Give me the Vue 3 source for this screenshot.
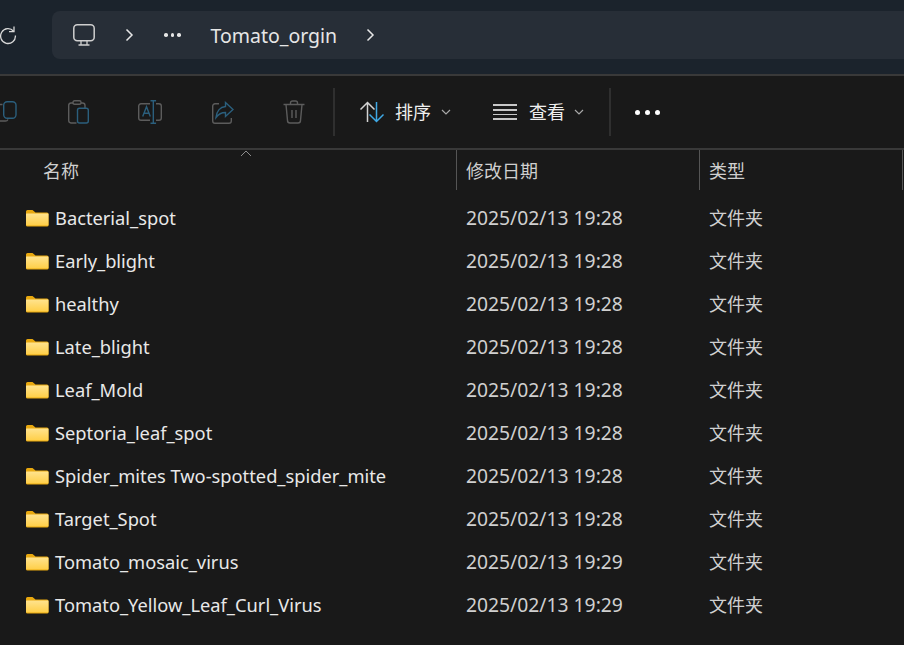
<script setup>
const rows = [
  ['Bacterial_spot', '2025/02/13 19:28'],
  ['Early_blight', '2025/02/13 19:28'],
  ['healthy', '2025/02/13 19:28'],
  ['Late_blight', '2025/02/13 19:28'],
  ['Leaf_Mold', '2025/02/13 19:28'],
  ['Septoria_leaf_spot', '2025/02/13 19:28'],
  ['Spider_mites Two-spotted_spider_mite', '2025/02/13 19:28'],
  ['Target_Spot', '2025/02/13 19:28'],
  ['Tomato_mosaic_virus', '2025/02/13 19:29'],
  ['Tomato_Yellow_Leaf_Curl_Virus', '2025/02/13 19:29'],
]
</script>

<template>
  <div class="win">
    <header class="top">
      <svg class="refresh" width="20" height="20" viewBox="0 0 20 20" fill="none" stroke="#d8d8d8" stroke-width="1.3">
        <path d="M15.6 6.2A7.4 7.4 0 1 0 17.4 10.5" />
        <path d="M16 1.6V6.6H11" />
      </svg>
      <div class="crumb">
        <svg class="pc" width="24" height="24" viewBox="0 0 24 24" fill="none" stroke="#cfcfcf" stroke-width="1.5">
          <rect x="1.8" y="1.8" width="20.4" height="16" rx="3.5" />
          <path d="M9 18v4M15 18v4M6.5 22h11" stroke-width="1.3" />
        </svg>
        <svg class="chev one" width="9" height="14" viewBox="0 0 9 14" fill="none" stroke="#e6e6e6" stroke-width="1.5"><path d="M1.5 1.5 7 7l-5.5 5.5" /></svg>
        <span class="dots"><i></i><i></i><i></i></span>
        <span class="crumb-text">Tomato_orgin</span>
        <svg class="chev" width="9" height="14" viewBox="0 0 9 14" fill="none" stroke="#e6e6e6" stroke-width="1.5"><path d="M1.5 1.5 7 7l-5.5 5.5" /></svg>
      </div>
    </header>

    <div class="tools">
      <svg class="t" width="17" height="24" viewBox="0 0 17 24" fill="none" stroke-width="1.4">
        <path d="M-1 21h6a3 3 0 0 0 3-1.500M2.500 4.500H0" stroke="#5c5c5c" />
        <rect x="3.700" y="1.700" width="12.300" height="16.500" rx="3.500" stroke="#2b5f7d" />
      </svg>
      <svg class="t paste" width="21" height="24" viewBox="0 0 21 24" fill="none" stroke-width="1.4">
        <path d="M5 3H3A2.500 2.500 0 0 0 .700 5.500v15A2.500 2.500 0 0 0 3 23h5.500M13 3h1.500A2.500 2.500 0 0 1 17 5.500v2.500" stroke="#5c5c5c" />
        <rect x="5" y=".700" width="8" height="3.600" rx="1.500" stroke="#5c5c5c" />
        <rect x="9.500" y="8.300" width="10.800" height="14.700" rx="2" stroke="#2b5f7d" />
      </svg>
      <svg class="t rename" width="24" height="24" viewBox="0 0 24 24" fill="none" stroke-width="1.4">
        <path d="M12 3.700H3A2.300 2.300 0 0 0 .700 6v12A2.300 2.300 0 0 0 3 20.300h9M18 3.700h3A2.300 2.300 0 0 1 23.300 6v12a2.300 2.300 0 0 1-2.300 2.300h-3" stroke="#5c5c5c" />
        <path d="M15.300 .7v22.600M12.500 .7h5.600M12.500 23.300h5.600M4.700 16.500 8.500 6.700l3.800 9.800M6 13.300h5" stroke="#2b5f7d" />
      </svg>
      <svg class="t share" width="22" height="24" viewBox="0 0 22 24" fill="none" stroke-width="1.4">
        <path d="M7 3.700H3A2.300 2.300 0 0 0 .7 6v15A2.300 2.300 0 0 0 3 23.300h14a2.300 2.300 0 0 0 2.300-2.300v-3" stroke="#5c5c5c" />
        <path d="M13.500 2.500 21 9.500l-7.500 7v-4C9.500 12.500 6.500 14 4 17.500 4.500 11.500 8 7 13.500 6.500Z" stroke="#2b5f7d" />
      </svg>
      <svg class="t trash" width="22" height="24" viewBox="0 0 22 24" fill="none" stroke="#5c5c5c" stroke-width="1.4">
        <path d="M.5 4.500h21M7.500 4.500V3a2 2 0 0 1 2-2h3a2 2 0 0 1 2 2v1.500M3 4.500 4.500 20.500a2.500 2.500 0 0 0 2.500 2.500h8a2.500 2.500 0 0 0 2.500-2.500L19 4.500M9 10v8M13 10v8" />
      </svg>
      <span class="sep first"></span>
      <svg class="sort" width="26" height="22" viewBox="0 0 26 22" fill="none" stroke-width="1.5">
        <path d="M8.500 21V1.500M1.500 8.500l7-7 7 7" stroke="#d4d4d4" />
        <path d="M17.500 1v19.500M10.500 13.500l7 7 7-7" stroke="#3fa9e6" />
      </svg>
      <span class="label sort-label">排序</span>
      <svg class="caret" width="10" height="6" viewBox="0 0 10 6" fill="none" stroke="#a8a8a8" stroke-width="1.2"><path d="M1 1l4 4 4-4" /></svg>
      <span class="lines"><i></i><i></i><i></i><i></i></span>
      <span class="label view-label">查看</span>
      <svg class="caret second" width="10" height="6" viewBox="0 0 10 6" fill="none" stroke="#a8a8a8" stroke-width="1.2"><path d="M1 1l4 4 4-4" /></svg>
      <span class="sep second"></span>
      <span class="more"><i></i><i></i><i></i></span>
    </div>

    <div class="head">
      <div class="h name">名称
        <svg class="up" width="12" height="7" viewBox="0 0 12 7" fill="none" stroke="#8c8c8c" stroke-width="1"><path d="M1 6l5-5 5 5" /></svg>
      </div>
      <div class="h date">修改日期</div>
      <div class="h type">类型</div>
    </div>

    <div class="list">
      <div v-for="r in rows" :key="r[0]" class="row">
        <svg class="folder" width="24" height="18" viewBox="0 0 24 18">
          <path d="M1 2.500A1.500 1.500 0 0 1 2.500 1H7.500L10.500 3.500H22A1.500 1.500 0 0 1 23.500 5V16A1.500 1.500 0 0 1 22 17.500H2.500A1.500 1.500 0 0 1 1 16Z" fill="#e8a80f" />
          <defs><linearGradient id="fg" x1="0" y1="0" x2="0" y2="1"><stop offset="0" stop-color="#ffe38e" /><stop offset="1" stop-color="#ffcf48" /></linearGradient></defs>
          <rect x="1" y="4.500" width="22.500" height="12" rx=".5" fill="url(#fg)" />
        </svg>
        <span class="fname">{{ r[0] }}</span>
        <span class="fdate">{{ r[1] }}</span>
        <span class="ftype">文件夹</span>
      </div>
    </div>
  </div>
</template>

<style>
html, body { margin: 0; background: #191919; overflow: hidden; }
</style>

<style scoped>
.win {
  width: 904px;
  height: 645px;
  overflow: hidden;
  background: #191919;
  color: #e4e4e4;
  font-family: "Noto Sans", "Noto Sans CJK SC", sans-serif;
  font-size: 18px;
}
.top {
  height: 74px;
  box-sizing: border-box;
  padding-top: 11px;
  display: flex;
  background: #1b232c;
}
.refresh { margin: 14px 0 0 -2px; flex: none; }
.crumb {
  flex: 1;
  margin-left: 34px;
  height: 48px;
  background: #272e37;
  border-radius: 8px 0 0 8px;
  display: flex;
  align-items: center;
  padding-left: 20px;
}
.chev.one { margin-left: 29px; }
.dots { display: flex; gap: 3px; margin-left: 30px; }
.dots i { width: 3.5px; height: 3.5px; border-radius: 50%; background: #e6e6e6; }
.crumb-text { margin-left: 30px; font-size: 19.5px; color: #e6e6e6; }
.crumb-text + .chev { margin-left: 29px; }
.tools {
  height: 76px;
  box-sizing: border-box;
  border-top: 2px solid #393939;
  border-bottom: 2px solid #393939;
  display: flex;
  align-items: center;
}
.t { flex: none; }
.paste { margin-left: 51px; }
.rename { margin-left: 49px; }
.share { margin-left: 50px; }
.trash { margin-left: 49px; }
.sep { width: 2px; height: 48px; background: #2f2f2f; flex: none; }
.sep.first { margin-left: 28px; }
.sort { margin-left: 24px; flex: none; }
.label { color: #eee; font-size: 18px; margin-top: -2px; }
.sort-label { margin-left: 10px; }
.caret { margin-left: 10px; flex: none; }
.caret.second { margin-left: 9px; }
.lines { display: flex; flex-direction: column; gap: 3px; margin-left: 42px; }
.lines i { display: block; width: 24px; height: 1.67px; background: #c8c8c8; }
.view-label { margin-left: 12px; }
.sep.second { margin-left: 25px; }
.more { display: flex; gap: 5px; margin-left: 24px; }
.more i { width: 5px; height: 5px; border-radius: 50%; background: #fff; }
.head {
  height: 40px;
  display: grid;
  grid-template-columns: 456px 243px 204px;
  font-size: 18px;
  color: #cfcfcf;
}
.h { position: relative; line-height: 42px; height: 40px; box-sizing: border-box; }
.name { padding-left: 43px; }
.date, .type { padding-left: 9px; border-left: 1px solid #555; }
.type { border-right: 1px solid #555; }
.up { position: absolute; left: 240px; top: 0; }
.list { padding-top: 6px; }
.row {
  height: 43px;
  display: grid;
  grid-template-columns: 25px 416px 243px 1fr;
  align-items: center;
  padding-left: 25px;
  font-size: 18.3px;
  color: #e8e8e8;
  white-space: nowrap;
}
.fname { padding-left: 5px; }
.ftype { color: #d0d0d0; font-size: 18px; margin-top: -2px; }
.fdate { color: #d0d0d0; font-size: 19.3px; }
</style>
